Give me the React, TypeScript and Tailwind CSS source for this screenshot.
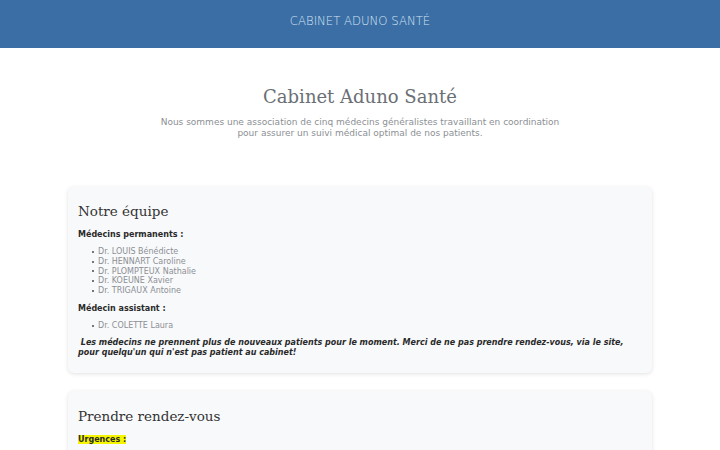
import React from 'react';

const permanents = [
    'Dr. LOUIS Bénédicte',
    'Dr. HENNART Caroline',
    'Dr. PLOMPTEUX Nathalie',
    'Dr. KOEUNE Xavier',
    'Dr. TRIGAUX Antoine',
];

const assistants = ['Dr. COLETTE Laura'];

const DoctorList: React.FC<{ items: string[] }> = ({ items }) => (
    <ul className="pl-[14px] text-[8px] leading-[9.75px] text-[#8c8f94]">
        {items.map(name => (
            <li key={name} className="flex items-center">
                <span className="w-[2px] h-[2px] bg-[#777] mr-[4px] shrink-0" />
                {name}
            </li>
        ))}
    </ul>
);

export default function App() {
    return (
        <div className="min-h-[450px] bg-white font-['DejaVu_Sans',sans-serif]">
            <header className="h-[48px] bg-[#3b6ea5] flex items-center justify-center pb-[4px]">
                <span className="text-[11.7px] font-extralight text-[#d5e3f3]">CABINET ADUNO SANTÉ</span>
            </header>

            <section className="pt-[37px] pb-[48px] text-center">
                <h1 className="font-['DejaVu_Serif',serif] text-[18px] leading-[24px] text-[#6b6f75]">
                    Cabinet Aduno Santé
                </h1>
                <p className="mt-[8px] text-[9px] leading-[11px] text-[#8c8f94]">
                    Nous sommes une association de cinq médecins généralistes travaillant en coordination
                    <br />
                    pour assurer un suivi médical optimal de nos patients.
                </p>
            </section>

            <main className="w-[584px] mx-auto flex flex-col gap-[18px]">
                <div className="bg-[#f8f9fb] rounded-[6px] shadow-[0_1px_4px_rgba(0,0,0,0.12)] px-[10px] pt-[15px] pb-[15px] text-[#2a2a2a]">
                    <h2 className="font-['DejaVu_Serif',serif] text-[13.5px] leading-[18px] text-[#333]">Notre équipe</h2>
                    <p className="mt-[9px] text-[8px] font-bold leading-[11px]">Médecins permanents :</p>
                    <div className="mt-[7px]">
                        <DoctorList items={permanents} />
                    </div>
                    <p className="mt-[7px] text-[8px] font-bold leading-[11px]">Médecin assistant :</p>
                    <div className="mt-[7px]">
                        <DoctorList items={assistants} />
                    </div>
                    <p className="mt-[7px] text-[8px] font-bold italic leading-[10px]">
                        &nbsp;Les médecins ne prennent plus de nouveaux patients pour le moment. Merci de ne pas prendre rendez-vous, via le site,
                        <br />
                        pour quelqu'un qui n'est pas patient au cabinet!
                    </p>
                </div>

                <div className="bg-[#f8f9fb] rounded-[6px] shadow-[0_1px_4px_rgba(0,0,0,0.12)] px-[10px] pt-[16px] pb-[15px] text-[#2a2a2a]">
                    <h2 className="font-['DejaVu_Serif',serif] text-[13.5px] leading-[18px] text-[#333]">Prendre rendez-vous</h2>
                    <p className="mt-[9px] text-[8px] font-bold leading-[11px]">
                        <span className="bg-[#f5f500]">Urgences :</span>
                    </p>
                </div>
            </main>
        </div>
    );
}
